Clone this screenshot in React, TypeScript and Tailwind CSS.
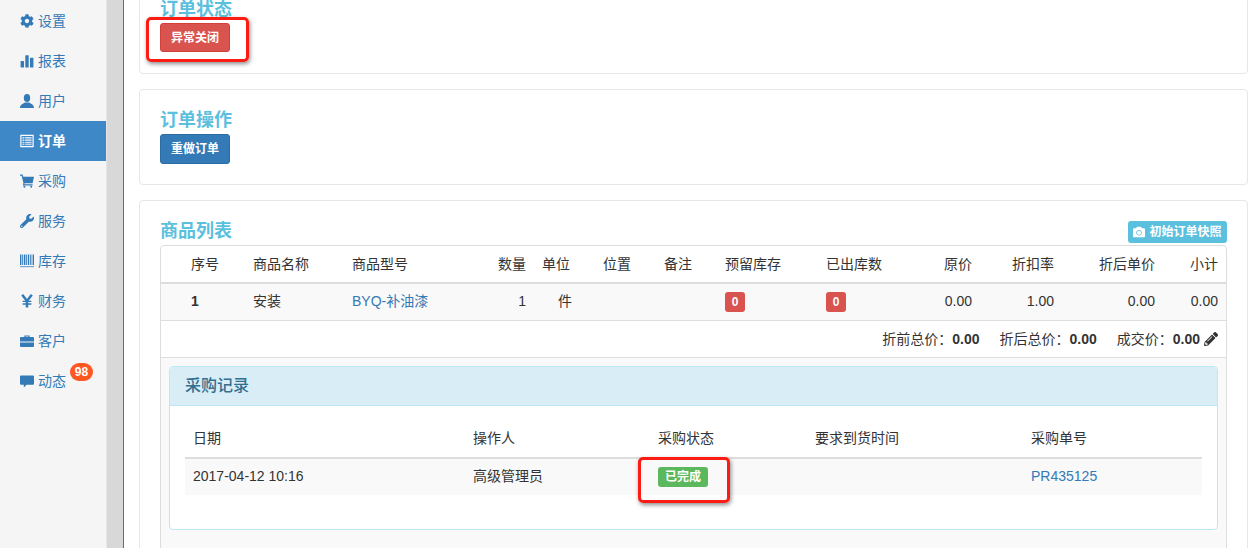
import { ReactNode } from 'react'
import { FaCamera, FaCog, FaPencilAlt, FaWrench } from 'react-icons/fa'

const FONT = "font-['Liberation_Sans','Noto_Sans_CJK_SC',sans-serif]"

function Glyph({ children }: { children: ReactNode }) {
  return (
    <svg viewBox="0 0 14 14" className="w-[14px] h-[14px]" fill="currentColor">
      {children}
    </svg>
  )
}

const StatsIcon = () => (
  <Glyph>
    <rect x="0.6" y="7" width="3.4" height="6.4" rx="0.5" />
    <rect x="5.3" y="1.2" width="3.4" height="12.2" rx="0.5" />
    <rect x="10" y="3.8" width="3.4" height="9.6" rx="0.5" />
  </Glyph>
)

const UserIcon = () => (
  <Glyph>
    <ellipse cx="7" cy="4" rx="3.2" ry="3.9" />
    <path d="M0 14C0 10.8 2.6 10.2 5 8.6h4c2.4 1.6 5 2.2 5 5.4z" />
  </Glyph>
)

const ListIcon = () => (
  <Glyph>
    <path fillRule="evenodd" d="M0.3 0.8h13.4v12.4H0.3zM1.5 2v10h11V2z" />
    <g opacity="0.75">
      <rect x="2.4" y="3" width="2" height="1.6" />
      <rect x="5.2" y="3" width="6.4" height="1.6" />
      <rect x="2.4" y="5.4" width="2" height="1.6" />
      <rect x="5.2" y="5.4" width="6.4" height="1.6" />
      <rect x="2.4" y="7.8" width="2" height="1.6" />
      <rect x="5.2" y="7.8" width="6.4" height="1.6" />
      <rect x="2.4" y="10.1" width="2" height="1" />
      <rect x="5.2" y="10.1" width="6.4" height="1" />
    </g>
  </Glyph>
)

const CartIcon = () => (
  <Glyph>
    <path d="M0 0.6h2.6l0.7 2.2H14l-1.4 6.4H4.6l-0.2 1.1h8.2v1.1H2.9l0.5-2.6L1.6 1.7H0z" />
    <circle cx="4.4" cy="12.8" r="1" />
    <circle cx="11.2" cy="12.8" r="1" />
  </Glyph>
)

const BarcodeIcon = () => (
  <Glyph>
    <rect x="0" y="0.5" width="1.4" height="10.5" />
    <rect x="2.2" y="0.5" width="0.8" height="10.5" />
    <rect x="3.8" y="0.5" width="1.6" height="10.5" />
    <rect x="6.2" y="0.5" width="0.8" height="10.5" />
    <rect x="7.8" y="0.5" width="1.4" height="10.5" />
    <rect x="10" y="0.5" width="0.8" height="10.5" />
    <rect x="11.6" y="0.5" width="0.8" height="10.5" />
    <rect x="13" y="0.5" width="1" height="10.5" />
    <rect x="0" y="12" width="14" height="1.2" opacity="0.65" />
  </Glyph>
)

const YenIcon = () => (
  <Glyph>
    <path d="M2.2 0.8L7 7l4.8-6.2M7 7v6.4" fill="none" stroke="currentColor" strokeWidth="2.5" />
    <path d="M2.6 7.4h8.8M2.6 10h8.8" fill="none" stroke="currentColor" strokeWidth="1.3" />
  </Glyph>
)

const BriefcaseIcon = () => (
  <Glyph>
    <path d="M4.4 3V1.4h5.2V3h-1.2V2.4H5.6V3z" />
    <path d="M0 4a1 1 0 0 1 1-1h12a1 1 0 0 1 1 1v3.4H0z" />
    <path d="M0 8.4h14V12a1 1 0 0 1-1 1H1a1 1 0 0 1-1-1z" />
  </Glyph>
)

const CommentIcon = () => (
  <Glyph>
    <path d="M1 1.4h12a1 1 0 0 1 1 1v7.4a1 1 0 0 1-1 1H6.6l-2.8 2.6v-2.6H1a1 1 0 0 1-1-1V2.4a1 1 0 0 1 1-1z" />
  </Glyph>
)

const NAV: { label: string; icon: ReactNode; active?: boolean; badge?: string }[] = [
  { label: '设置', icon: <FaCog size={14} /> },
  { label: '报表', icon: <StatsIcon /> },
  { label: '用户', icon: <UserIcon /> },
  { label: '订单', icon: <ListIcon />, active: true },
  { label: '采购', icon: <CartIcon /> },
  { label: '服务', icon: <FaWrench size={14} /> },
  { label: '库存', icon: <BarcodeIcon /> },
  { label: '财务', icon: <YenIcon /> },
  { label: '客户', icon: <BriefcaseIcon /> },
  { label: '动态', icon: <CommentIcon />, badge: '98' },
]

function Sidebar() {
  return (
    <div className="w-[106px] shrink-0 bg-[#f5f5f5] pt-px">
      {NAV.map(item => (
        <div
          key={item.label}
          className={`relative flex items-center h-10 pl-5 gap-1 text-[14px] ${
            item.active ? 'bg-[#3f88c8] text-white font-bold' : 'text-[#337ab7]'
          }`}
        >
          <span className="w-[14px] flex justify-center">{item.icon}</span>
          <span>{item.label}</span>
          {item.badge && (
            <span className="absolute left-[70px] top-[2px] h-[18px] w-[23px] rounded-[9px] bg-[#ff5722] text-white text-[12px] font-bold leading-[18px] text-center">
              {item.badge}
            </span>
          )}
        </div>
      ))}
    </div>
  )
}

function Heading({ children }: { children: ReactNode }) {
  return <div className="text-[18px] leading-[20px] text-[#5bc0de] font-bold">{children}</div>
}

function Label({ className, children }: { className: string; children: ReactNode }) {
  return (
    <span className={`inline-block rounded-[3px] text-white text-[12px] font-bold text-center ${className}`}>
      {children}
    </span>
  )
}

const th = 'px-2 font-normal text-[#333] h-[37px]'
const td = 'px-2 text-[#333] h-[37px]'

function ProductTable() {
  return (
    <div className="border border-[#ddd] rounded-t-[4px] h-[400px]">
      <table className="w-full table-fixed border-collapse text-[14px]">
        <colgroup>
          <col className="w-[84px]" />
          <col className="w-[99px]" />
          <col className="w-[146px]" />
          <col className="w-[44px]" />
          <col className="w-[61px]" />
          <col className="w-[61px]" />
          <col className="w-[61px]" />
          <col className="w-[101px]" />
          <col className="w-[82px]" />
          <col className="w-[80px]" />
          <col className="w-[82px]" />
          <col className="w-[101px]" />
          <col />
        </colgroup>
        <thead>
          <tr className="border-b-2 border-[#ddd]">
            <th className={`${th} text-left pl-[30px] pr-0`}>序号</th>
            <th className={`${th} text-left`}>商品名称</th>
            <th className={`${th} text-left`}>商品型号</th>
            <th className={`${th} text-right`}>数量</th>
            <th className={`${th} text-left`}>单位</th>
            <th className={`${th} text-left`}>位置</th>
            <th className={`${th} text-left`}>备注</th>
            <th className={`${th} text-left`}>预留库存</th>
            <th className={`${th} text-left`}>已出库数</th>
            <th className={`${th} text-right`}>原价</th>
            <th className={`${th} text-right`}>折扣率</th>
            <th className={`${th} text-right`}>折后单价</th>
            <th className={`${th} text-right`}>小计</th>
          </tr>
        </thead>
        <tbody>
          <tr className="bg-[#f9f9f9] border-b border-[#ddd]">
            <td className={`${td} pl-[30px] pr-0 font-bold`}>1</td>
            <td className={td}>安装</td>
            <td className={`${td} text-[#337ab7]`}>BYQ-补油漆</td>
            <td className={`${td} text-right`}>1</td>
            <td className={`${td} pl-[24px] pr-0`}>件</td>
            <td className={td}></td>
            <td className={td}></td>
            <td className={td}>
              <Label className="bg-[#d9534f] w-[20px] h-[20px] leading-[20px]">0</Label>
            </td>
            <td className={td}>
              <Label className="bg-[#d9534f] w-[20px] h-[20px] leading-[20px]">0</Label>
            </td>
            <td className={`${td} text-right`}>0.00</td>
            <td className={`${td} text-right`}>1.00</td>
            <td className={`${td} text-right`}>0.00</td>
            <td className={`${td} text-right`}>0.00</td>
          </tr>
        </tbody>
      </table>
      <div className="flex items-center justify-end h-[37px] pt-px border-b border-[#ddd] text-[14px] text-[#333] pr-2">
        <span>折前总价：</span>
        <b>0.00</b>
        <span className="ml-5">折后总价：</span>
        <b>0.00</b>
        <span className="ml-5">成交价：</span>
        <b>0.00</b>
        <FaPencilAlt size={14} className="ml-[4px]" />
      </div>
      <div className="bg-[#f9f9f9] px-2 pt-2 h-[200px]">
        <PurchasePanel />
      </div>
    </div>
  )
}

function PurchasePanel() {
  return (
    <div className="border border-[#bce8f1] rounded-[4px] bg-white h-[164px]">
      <div className="h-[39px] pt-px bg-[#d9edf7] border-b border-[#bce8f1] rounded-t-[3px] flex items-center px-[15px] text-[16px] text-[#31708f] font-medium">
        采购记录
      </div>
      <div className="px-[15px] pt-[15px]">
        <table className="w-full table-fixed border-collapse text-[14px]">
          <colgroup>
            <col className="w-[280px]" />
            <col className="w-[185px]" />
            <col className="w-[157px]" />
            <col className="w-[216px]" />
            <col />
          </colgroup>
          <thead>
            <tr className="border-b-2 border-[#ddd]">
              <th className={`${th} text-left`}>日期</th>
              <th className={`${th} text-left`}>操作人</th>
              <th className={`${th} text-left`}>采购状态</th>
              <th className={`${th} text-left`}>要求到货时间</th>
              <th className={`${th} text-left`}>采购单号</th>
            </tr>
          </thead>
          <tbody>
            <tr className="bg-[#f9f9f9]">
              <td className={td}>2017-04-12 10:16</td>
              <td className={td}>高级管理员</td>
              <td className={td}>
                <Label className="bg-[#5cb85c] w-[50px] h-[20px] leading-[20px]">已完成</Label>
              </td>
              <td className={td}></td>
              <td className={`${td} text-[#337ab7]`}>PR435125</td>
            </tr>
          </tbody>
        </table>
      </div>
    </div>
  )
}

export default function App() {
  return (
    <div className={`relative flex h-[548px] w-[1254px] overflow-hidden bg-white ${FONT}`}>
      <Sidebar />
      <div className="w-[17px] shrink-0 bg-[#d8d8d8] border-l border-[#e6e6e6]" />
      <div className="flex-1 min-w-0 border-l border-[#337ab7] bg-white pl-[15px] pr-[6px] flex flex-col gap-[15px]">
        <div className="h-[75px] -mt-px border border-[#e7e7e7] rounded-b-[4px] bg-white pl-5 shrink-0">
          <div className="-mt-px">
            <Heading>订单状态</Heading>
          </div>
          <button className="mt-[4px] w-[70px] h-[29px] rounded-[3px] bg-[#d9534f] border border-[#d43f3a] text-white text-[12px] font-bold">
            异常关闭
          </button>
        </div>
        <div className="h-[96px] border border-[#e7e7e7] rounded-[4px] bg-white pl-5 pt-5 shrink-0">
          <Heading>订单操作</Heading>
          <button className="mt-[4px] w-[70px] h-[30px] rounded-[3px] bg-[#337ab7] border border-[#2e6da4] text-white text-[12px] font-bold">
            重做订单
          </button>
        </div>
        <div className="flex-1 border border-[#e7e7e7] rounded-t-[4px] bg-white px-5 pt-[20px] shrink-0">
          <div className="relative h-[24px]">
            <Heading>商品列表</Heading>
            <button className="absolute right-0 top-0 flex items-center justify-center gap-1 w-[99px] h-[22px] rounded-[3px] bg-[#5bc0de] text-white text-[12px] font-bold">
              <FaCamera size={12} />
              初始订单快照
            </button>
          </div>
          <ProductTable />
        </div>
      </div>
      {/* 红色标注框 */}
      <div className="absolute left-[146px] top-[17px] w-[103px] h-[45px] border-[3px] border-[#fc1c13] rounded-[5px] shadow-[1px_2px_4px_rgba(0,0,0,0.45)]" />
      <div className="absolute left-[638px] top-[457px] w-[92px] h-[46px] border-[3px] border-[#fc1c13] rounded-[5px] shadow-[1px_2px_4px_rgba(0,0,0,0.45)]" />
    </div>
  )
}
